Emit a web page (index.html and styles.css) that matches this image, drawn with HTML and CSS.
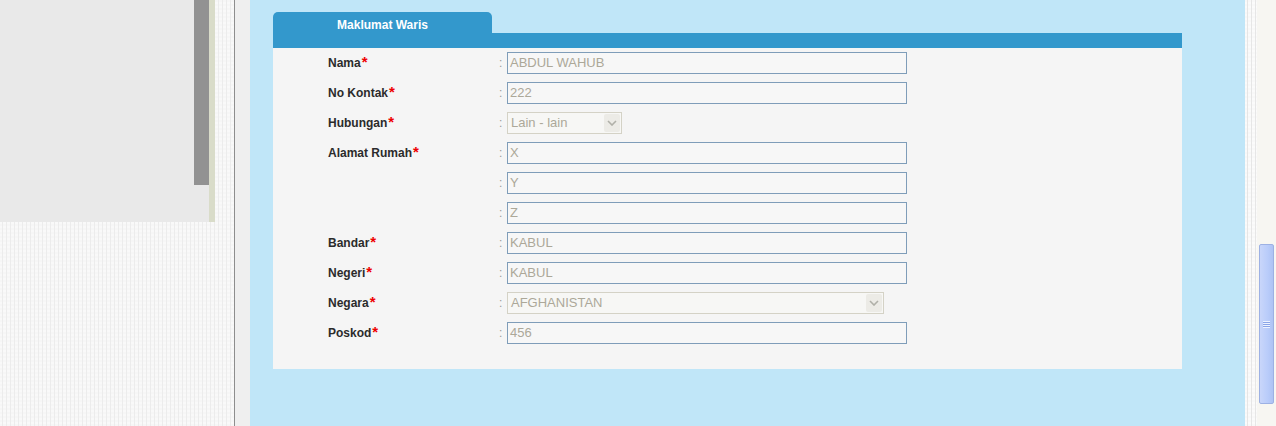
FILE: index.html
```html
<!DOCTYPE html>
<html>
<head>
<meta charset="utf-8">
<link rel="stylesheet" href="styles.css">
</head>
<body>
<div class="page">
  <div class="left">
    <div class="left-panel">
      <div class="lp-main"></div>
      <div class="lp-bar"><div class="lp-bar-dark"></div></div>
      <div class="lp-beige"></div>
    </div>
  </div>
  <div class="gutter"></div>
  <div class="main">
    <div class="card">
      <div class="tab-row">
        <div class="tab">Maklumat Waris</div>
      </div>
      <div class="band"></div>
      <div class="body">
        <div class="row"><div class="label">Nama<span class="req">*</span></div><div class="colon">:</div><div class="input w400">ABDUL WAHUB</div></div>
        <div class="row"><div class="label">No Kontak<span class="req">*</span></div><div class="colon">:</div><div class="input w400">222</div></div>
        <div class="row"><div class="label">Hubungan<span class="req">*</span></div><div class="colon">:</div><div class="select w115"><span class="sel-text">Lain - lain</span><span class="arrow"><svg width="10" height="6" viewBox="0 0 10 6"><path d="M1 1 L5 5 L9 1" fill="none" stroke="#b0b0a8" stroke-width="1.6"/></svg></span></div></div>
        <div class="row"><div class="label">Alamat Rumah<span class="req">*</span></div><div class="colon">:</div><div class="input w400">X</div></div>
        <div class="row"><div class="label"></div><div class="colon">:</div><div class="input w400">Y</div></div>
        <div class="row"><div class="label"></div><div class="colon">:</div><div class="input w400">Z</div></div>
        <div class="row"><div class="label">Bandar<span class="req">*</span></div><div class="colon">:</div><div class="input w400">KABUL</div></div>
        <div class="row"><div class="label">Negeri<span class="req">*</span></div><div class="colon">:</div><div class="input w400">KABUL</div></div>
        <div class="row"><div class="label">Negara<span class="req">*</span></div><div class="colon">:</div><div class="select w377"><span class="sel-text">AFGHANISTAN</span><span class="arrow"><svg width="10" height="6" viewBox="0 0 10 6"><path d="M1 1 L5 5 L9 1" fill="none" stroke="#b0b0a8" stroke-width="1.6"/></svg></span></div></div>
        <div class="row"><div class="label">Poskod<span class="req">*</span></div><div class="colon">:</div><div class="input w400">456</div></div>
      </div>
    </div>
  </div>
  <div class="stripe"></div>
  <div class="scroll">
    <div class="thumb"><span class="grip"></span></div>
  </div>
</div>
</body>
</html>
```

FILE: styles.css
```css
html, body {
  margin: 0;
  padding: 0;
  overflow: hidden;
}
body {
  width: 1276px;
  height: 426px;
  font-family: "Liberation Sans", Arial, sans-serif;
}
.page {
  display: flex;
  width: 1276px;
  height: 426px;
}
.left {
  width: 234px;
  height: 426px;
  border-right: 1px solid #8e8e8e;
  background-color: #f6f6f6;
  background-image:
    repeating-linear-gradient(90deg, transparent 0 2px, #ececec 2px 3px, transparent 3px 4px),
    repeating-linear-gradient(0deg, transparent 0 2px, #f9f9f9 2px 4px);
}
.left-panel {
  display: flex;
  width: 215px;
  height: 222px;
}
.lp-main {
  width: 194px;
  height: 222px;
  background: #e9e9e9;
}
.lp-bar {
  width: 15px;
  height: 222px;
  background: #e9e9e9;
}
.lp-bar-dark {
  height: 185px;
  background: #929292;
}
.lp-beige {
  width: 6px;
  height: 222px;
  background: #d9dcc9;
}
.gutter {
  width: 15px;
  height: 426px;
  background: #efefef;
}
.main {
  width: 972px;
  height: 414px;
  padding: 12px 0 0 23px;
  background: #c0e6f8;
}
.card {
  width: 909px;
}
.tab-row {
  display: flex;
  height: 21px;
}
.tab {
  width: 219px;
  height: 21px;
  border-radius: 5px 5px 0 0;
  background: #3398cc;
  color: #ffffff;
  font-weight: bold;
  font-size: 12px;
  line-height: 27px;
  text-align: center;
}
.band {
  height: 15px;
  background: #3398cc;
}
.body {
  height: 317px;
  padding-top: 4px;
  background: #f5f5f5;
}
.row {
  display: flex;
  align-items: center;
  height: 22px;
  margin-bottom: 8px;
  padding-left: 55px;
}
.label {
  width: 171px;
  font-size: 12px;
  font-weight: bold;
  color: #2b2b2b;
}
.req {
  color: #ee0000;
  font-size: 15px;
  line-height: 10px;
  margin-left: 1px;
}
.colon {
  width: 8px;
  font-size: 12px;
  color: #9a9a9a;
}
.input {
  box-sizing: border-box;
  height: 22px;
  border: 1px solid #7f9db9;
  background: #f7f7f7;
  color: #aca899;
  font-size: 13px;
  line-height: 20px;
  padding-left: 2px;
}
.w400 { width: 400px; }
.select {
  box-sizing: border-box;
  display: flex;
  align-items: center;
  height: 22px;
  border: 1px solid #d4d2c6;
  background: #f7f7f5;
  color: #aca899;
  font-size: 13px;
  padding: 1px;
}
.w115 { width: 115px; }
.w377 { width: 377px; }
.sel-text {
  flex: 1;
  padding-left: 2px;
  line-height: 18px;
}
.arrow {
  display: flex;
  align-items: center;
  justify-content: center;
  width: 16px;
  height: 18px;
  background: #ecebe6;
  border-radius: 2px;
}
.stripe {
  width: 12px;
  height: 426px;
  background-color: #f8f8f8;
  background-image:
    repeating-linear-gradient(90deg, transparent 0 2px, #e6e6e6 2px 3px, transparent 3px 4px),
    repeating-linear-gradient(0deg, transparent 0 2px, #fbfbfb 2px 4px);
}
.scroll {
  position: relative;
  width: 19px;
  height: 426px;
  background: #f7f6f2;
}
.thumb {
  position: absolute;
  left: 2px;
  top: 244px;
  box-sizing: border-box;
  width: 15px;
  height: 160px;
  border: 1px solid #9db1e4;
  border-radius: 2px;
  background: linear-gradient(90deg, #c9d6fa, #b9ccfa 60%, #aec3f4);
  display: flex;
  align-items: center;
  justify-content: center;
}
.grip {
  width: 7px;
  height: 7px;
  background: repeating-linear-gradient(0deg, #eef3ff 0 1px, #8aa5e8 1px 2px);
}
```
